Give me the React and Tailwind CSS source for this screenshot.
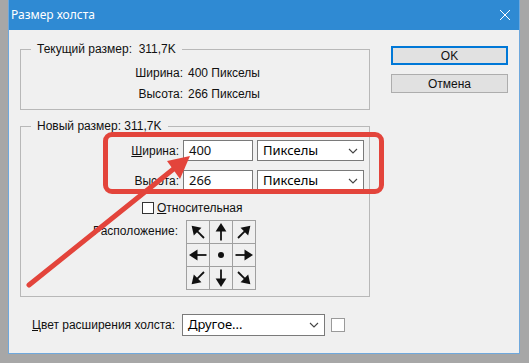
import React from 'react'

const UI = { fontFamily: '"Liberation Sans", Arial, sans-serif' }
const FIELD = { fontFamily: '"Noto Sans", "Open Sans", sans-serif' }

function Chevron() {
  return (
    <svg width="10" height="6" viewBox="0 0 10 6" className="shrink-0">
      <polyline points="1,1 5,5 9,1" fill="none" stroke="#444" strokeWidth="1.1" />
    </svg>
  )
}

function Select({ value, className }) {
  return (
    <div className={`flex items-center justify-between bg-white border border-[#7a7a7a] pl-[5px] pr-[5px] text-[13px] text-black ${className}`} style={FIELD}>
      <span>{value}</span>
      <Chevron />
    </div>
  )
}

function Arrow({ angle }) {
  return (
    <svg width="20" height="20" viewBox="0 0 20 20">
      <g transform={`rotate(${angle} 10 10)`}>
        <polygon points="10,1 4.6,9.5 15.4,9.5" fill="#111" />
        <line x1="10" y1="8" x2="10" y2="18.5" stroke="#111" strokeWidth="1.8" />
      </g>
    </svg>
  )
}

const ANCHORS = [315, 0, 45, 270, null, 90, 225, 180, 135]

export default function App() {
  return (
    <div className="relative w-[529px] h-[363px] bg-[#a7a7a7] pl-[8px] pr-[9px] pb-[9px] overflow-hidden" style={UI}>
      {/* окно */}
      <div className="flex flex-col h-full border border-t-0 border-[#6fa8dc] bg-[#f0f0f0]">
        <div className="h-[30px] bg-[#2f8ad3] flex items-center justify-between pl-[2px] pr-[8px] shrink-0">
          <span className="text-white text-[12px]" style={FIELD}>Размер холста</span>
          <svg width="12" height="12" viewBox="0 0 12 12">
            <path d="M1 1 L11 11 M11 1 L1 11" stroke="#fff" strokeWidth="1" />
          </svg>
        </div>

        <div className="flex flex-1 pl-[11px] pr-[11px] pt-[11px] text-[12px] text-[#111]">
          <div className="w-[350px]">
            <fieldset className="border border-[#b8b8b8] pb-[5px]">
              <legend className="ml-[10px] px-[6px] leading-[16px]">Текущий размер:&nbsp; 311,7K</legend>
              <div className="pt-[5px]">
                <div className="flex h-[21px] items-center">
                  <span className="w-[162px] text-right">Ширина:</span>
                  <span className="ml-[5px]">400 Пикселы</span>
                </div>
                <div className="flex h-[21px] items-center">
                  <span className="w-[162px] text-right">Высота:</span>
                  <span className="ml-[5px]">266 Пикселы</span>
                </div>
              </div>
            </fieldset>

            <fieldset className="mt-[8px] border border-[#b8b8b8] pb-[6px]">
              <legend className="ml-[10px] px-[6px] leading-[16px]">Новый размер: 311,7K</legend>
              <div className="pt-[6px] flex flex-col">
                <div className="flex items-center h-[21px]">
                  <span className="w-[158px] text-right"><u>Ш</u>ирина:</span>
                  <div className="ml-[4px] w-[70px] h-[21px] bg-white border border-[#7a7a7a] pl-[5px] text-[13px] flex items-center" style={FIELD}>400</div>
                  <Select value="Пикселы" className="ml-[4px] w-[107px] h-[21px]" />
                </div>
                <div className="flex items-center h-[21px] mt-[9px]">
                  <span className="w-[158px] text-right">Высота:</span>
                  <div className="ml-[4px] w-[70px] h-[21px] bg-white border border-[#7a7a7a] pl-[5px] text-[13px] flex items-center" style={FIELD}>266</div>
                  <Select value="Пикселы" className="ml-[4px] w-[107px] h-[21px]" />
                </div>
                <div className="flex items-center mt-[10px] ml-[121px] h-[14px]">
                  <span className="w-[12px] h-[12px] border border-[#333] bg-white" />
                  <span className="ml-[3px]"><u>О</u>тносительная</span>
                </div>
                <div className="flex mt-[5px]">
                  <span className="w-[157px] text-right pt-[2px]">Расположение:</span>
                  <div className="ml-[8px] grid grid-cols-3 gap-px p-px bg-[#a0a0a0]">
                    {ANCHORS.map((a, i) => (
                      <div key={i} className="w-[22px] h-[22px] bg-[#f0f0f0] flex items-center justify-center">
                        {a === null ? <span className="w-[6px] h-[6px] rounded-full bg-[#111]" /> : <Arrow angle={a} />}
                      </div>
                    ))}
                  </div>
                </div>
              </div>
            </fieldset>

            <div className="flex items-center mt-[17px] ml-[12px]">
              <span className="w-[150px]"><u>Ц</u>вет расширения холста:</span>
              <Select value="Другое..." className="w-[143px] h-[22px]" />
              <span className="ml-[6px] w-[14px] h-[14px] border border-[#9a9a9a] bg-white" />
            </div>
          </div>

          <div className="ml-[21px] w-[117px] flex flex-col pt-[5px]">
            <button className="h-[19px] border-2 border-[#0078d7] bg-[#e1e1e1] text-[12px] leading-none">OK</button>
            <button className="mt-[9px] h-[19px] border border-[#adadad] bg-[#e1e1e1] text-[12px] leading-none">Отмена</button>
          </div>
        </div>
      </div>

      {/* красная рамка и стрелка поверх диалога */}
      <div className="absolute left-[103px] top-[132px] w-[281px] h-[62px] border-[5px] border-[#e3443b] rounded-[9px] pointer-events-none" />
      <svg className="absolute left-0 top-0 pointer-events-none" width="529" height="363">
        <line x1="29" y1="285" x2="176" y2="167" stroke="#e3443b" strokeWidth="5" strokeLinecap="round" />
        <polygon points="190,156 167,161 180,179" fill="#e3443b" />
      </svg>
    </div>
  )
}
